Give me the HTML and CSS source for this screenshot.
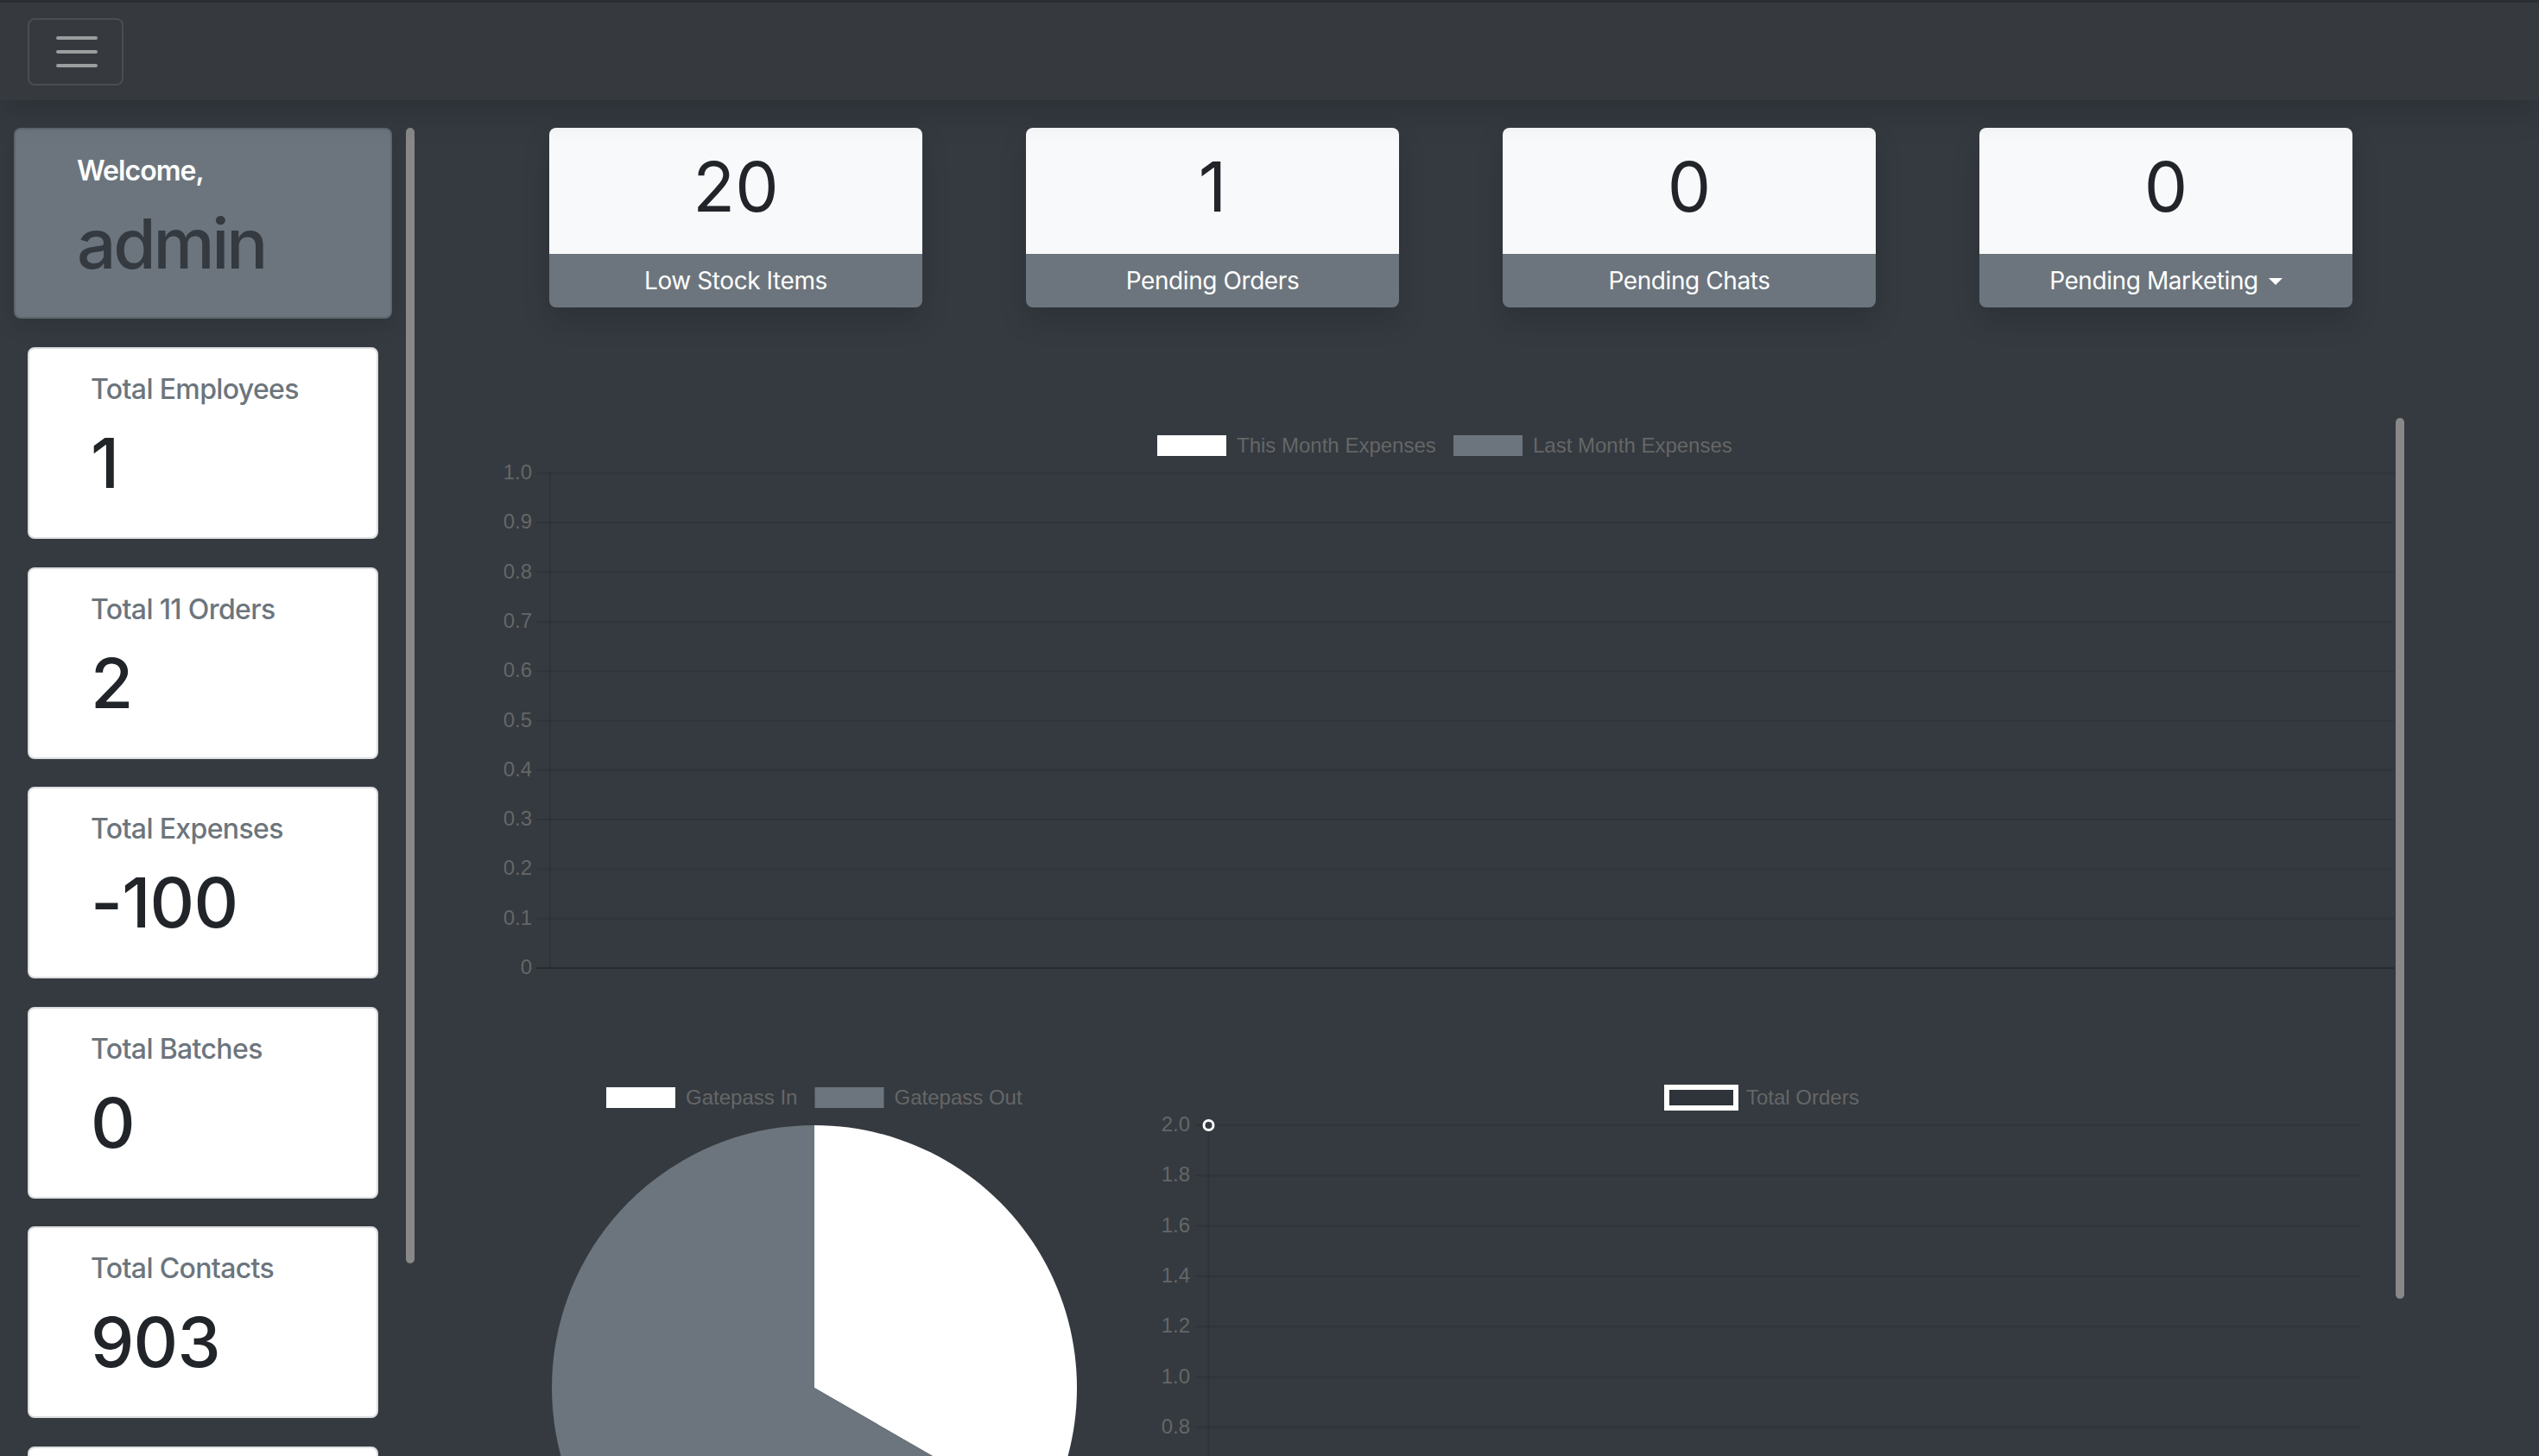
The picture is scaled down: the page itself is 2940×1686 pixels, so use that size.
FILE: index.html
```html
<!DOCTYPE html>
<html lang="en">
<head>
  <meta charset="UTF-8">
  <title>Dashboard</title>
  <meta name="viewport" content="width=device-width, initial-scale=1.0">
  <link rel="stylesheet" href="styles.css">
</head>
<body>
  <!-- Top bar with the menu toggler -->
  <header class="navbar">
    <button class="toggler" aria-label="Toggle navigation">
      <svg viewBox="0 0 30 30" width="60" height="60">
        <path d="M4 7h22M4 15h22M4 23h22" stroke="rgba(255,255,255,0.5)" stroke-width="2" stroke-linecap="round" fill="none"/>
      </svg>
    </button>
  </header>

  <div class="layout">
    <!-- Left column: greeting and totals -->
    <aside class="sidebar">
      <div class="side-list">
        <div class="welcome">
          <div class="welcome-label">Welcome,</div>
          <div class="welcome-name">admin</div>
        </div>
        <div class="stat">
          <div class="stat-title">Total Employees</div>
          <div class="stat-value">1</div>
        </div>
        <div class="stat">
          <div class="stat-title">Total 11 Orders</div>
          <div class="stat-value">2</div>
        </div>
        <div class="stat">
          <div class="stat-title">Total Expenses</div>
          <div class="stat-value">-100</div>
        </div>
        <div class="stat">
          <div class="stat-title">Total Batches</div>
          <div class="stat-value">0</div>
        </div>
        <div class="stat">
          <div class="stat-title">Total Contacts</div>
          <div class="stat-value">903</div>
        </div>
        <div class="stat">
          <div class="stat-title">Total Suppliers</div>
          <div class="stat-value">0</div>
        </div>
      </div>
      <div class="rail"><div class="thumb side-thumb"></div></div>
    </aside>

    <main class="main">
      <!-- Pending counters -->
      <section class="tiles">
        <div class="tile">
          <div class="tile-value">20</div>
          <div class="tile-label">Low Stock Items</div>
        </div>
        <div class="tile">
          <div class="tile-value">1</div>
          <div class="tile-label">Pending Orders</div>
        </div>
        <div class="tile">
          <div class="tile-value">0</div>
          <div class="tile-label">Pending Chats</div>
        </div>
        <div class="tile">
          <div class="tile-value">0</div>
          <div class="tile-label"><span class="dropdown-toggle">Pending Marketing</span></div>
        </div>
      </section>

      <!-- Charts -->
      <section class="charts">
        <div class="chart-body">
          <svg class="chart bar-chart" width="2199" height="755" viewBox="0 0 2199 755">
            <g class="legend">
              <rect x="765" y="20" width="80" height="24" fill="#ffffff"/>
              <text x="857" y="39.5">This Month Expenses</text>
              <rect x="1108" y="20" width="80" height="24" fill="#6c757d"/>
              <text x="1200" y="39.5">Last Month Expenses</text>
            </g>
            <g class="grid">
              <line x1="46" y1="64" x2="2197" y2="64"/>
              <line x1="46" y1="121.3" x2="2197" y2="121.3"/>
              <line x1="46" y1="178.6" x2="2197" y2="178.6"/>
              <line x1="46" y1="235.9" x2="2197" y2="235.9"/>
              <line x1="46" y1="293.2" x2="2197" y2="293.2"/>
              <line x1="46" y1="350.5" x2="2197" y2="350.5"/>
              <line x1="46" y1="407.8" x2="2197" y2="407.8"/>
              <line x1="46" y1="465.1" x2="2197" y2="465.1"/>
              <line x1="46" y1="522.4" x2="2197" y2="522.4"/>
              <line x1="46" y1="579.7" x2="2197" y2="579.7"/>
              <line x1="62" y1="64" x2="62" y2="637"/>
              <line class="zero" x1="46" y1="637" x2="2197" y2="637"/>
            </g>
            <g class="ticks">
              <text x="41" y="71">1.0</text>
              <text x="41" y="128.3">0.9</text>
              <text x="41" y="185.6">0.8</text>
              <text x="41" y="242.9">0.7</text>
              <text x="41" y="300.2">0.6</text>
              <text x="41" y="357.5">0.5</text>
              <text x="41" y="414.8">0.4</text>
              <text x="41" y="472.1">0.3</text>
              <text x="41" y="529.4">0.2</text>
              <text x="41" y="586.7">0.1</text>
              <text x="41" y="644">0</text>
            </g>
          </svg>

          <div class="chart-row">
            <svg class="chart pie-chart" width="736" height="690" viewBox="0 0 736 690">
              <g class="legend">
                <rect x="127" y="20" width="80" height="24" fill="#ffffff"/>
                <text x="219" y="39.5">Gatepass In</text>
                <rect x="368.5" y="20" width="80" height="24" fill="#6c757d"/>
                <text x="460.5" y="39.5">Gatepass Out</text>
              </g>
              <path d="M368 368 L368 64 A304 304 0 0 1 631.27 520 Z" fill="#ffffff"/>
              <path d="M368 368 L631.27 520 A304 304 0 1 1 368 64 Z" fill="#6c757d"/>
            </svg>

            <svg class="chart line-chart" width="1388" height="690" viewBox="0 0 1388 690">
              <g class="legend">
                <rect x="585" y="20" width="80" height="24" fill="rgba(0,0,0,0.1)" stroke="#ffffff" stroke-width="6"/>
                <text x="677" y="39.5">Total Orders</text>
              </g>
              <g class="grid">
                <line x1="39" y1="64" x2="1388" y2="64"/>
                <line x1="39" y1="122.3" x2="1388" y2="122.3"/>
                <line x1="39" y1="180.6" x2="1388" y2="180.6"/>
                <line x1="39" y1="238.9" x2="1388" y2="238.9"/>
                <line x1="39" y1="297.2" x2="1388" y2="297.2"/>
                <line x1="39" y1="355.5" x2="1388" y2="355.5"/>
                <line x1="39" y1="413.8" x2="1388" y2="413.8"/>
                <line x1="39" y1="472.1" x2="1388" y2="472.1"/>
                <line x1="39" y1="530.4" x2="1388" y2="530.4"/>
                <line x1="39" y1="588.7" x2="1388" y2="588.7"/>
                <line x1="54.5" y1="64" x2="54.5" y2="667"/>
                <line class="zero" x1="39" y1="647" x2="1388" y2="647"/>
              </g>
              <g class="ticks">
                <text x="33" y="71">2.0</text>
                <text x="33" y="129.3">1.8</text>
                <text x="33" y="187.6">1.6</text>
                <text x="33" y="245.9">1.4</text>
                <text x="33" y="304.2">1.2</text>
                <text x="33" y="362.5">1.0</text>
                <text x="33" y="420.8">0.8</text>
                <text x="33" y="479.1">0.6</text>
                <text x="33" y="537.4">0.4</text>
                <text x="33" y="595.7">0.2</text>
                <text x="33" y="654">0</text>
              </g>
              <circle cx="54.5" cy="64" r="5.5" fill="#343a40" stroke="#ffffff" stroke-width="3"/>
            </svg>
          </div>
        </div>
        <div class="rail"><div class="thumb chart-thumb"></div></div>
      </section>
    </main>
  </div>
</body>
</html>
```

FILE: styles.css
```css
html, body {
  margin: 0;
  padding: 0;
}
body {
  height: 1686px;
  overflow: hidden;
  background: #343a40;
  font-family: Inter, "Noto Sans", sans-serif;
}

/* Top bar */
.navbar {
  position: relative;
  z-index: 2;
  height: 113px;
  border-top: 3px solid #2b2f33;
  background: #363a3f;
  display: flex;
  align-items: center;
  padding: 0 32px;
  box-shadow: 0 16px 32px rgba(0,0,0,0.15);
}
.toggler {
  width: 111px;
  height: 78px;
  margin-top: 1px;
  padding: 0;
  display: flex;
  align-items: center;
  justify-content: center;
  background: transparent;
  border: 2px solid rgba(255,255,255,0.1);
  border-radius: 8px;
}
.toggler svg {
  display: block;
  margin-left: 3px;
}

.layout {
  display: flex;
  height: 1570px;
  overflow: hidden;
}

/* Fake scroll rails */
.rail {
  width: 10px;
  flex: none;
}
.thumb {
  width: 10px;
  background: #888;
  border-radius: 5px;
}
.side-thumb { height: 1315px; }
.chart-thumb { height: 1020px; }

/* Sidebar */
.sidebar {
  width: 480px;
  flex: none;
  margin-top: 32px;
  display: flex;
  overflow: hidden;
}
.side-list {
  width: 438px;
  padding: 0 16px;
}
.welcome {
  box-sizing: border-box;
  height: 221px;
  margin-bottom: 33px;
  padding: 29px 0 0 71px;
  background: #6c757d;
  border: 2px solid rgba(0,0,0,0.125);
  border-radius: 8px;
  box-shadow: 0 8px 24px rgba(0,0,0,0.12);
}
.welcome-label {
  color: #fff;
  font-size: 32px;
  font-weight: 600;
  line-height: 1.2;
  letter-spacing: -0.03em;
  margin-bottom: 17px;
}
.welcome-name {
  color: #343a40;
  font-size: 80px;
  font-weight: 500;
  line-height: 1.2;
  letter-spacing: -0.04em;
}

.stat {
  box-sizing: border-box;
  height: 222px;
  margin: 0 16px 32.5px;
  padding: 28px 0 0 71px;
  background: #fff;
  border: 2px solid #dcdddf;
  border-radius: 8px;
}
.stat-title {
  color: #6c757d;
  font-size: 32px;
  font-weight: 500;
  line-height: 1.2;
  letter-spacing: -0.02em;
  margin-bottom: 18px;
}
.stat-value {
  color: #212529;
  font-size: 80px;
  font-weight: 500;
  line-height: 1.2;
  letter-spacing: -0.01em;
}

/* Main column */
.main {
  flex: 1;
  padding: 32px 0 0 95px;
}
.tiles {
  display: grid;
  grid-template-columns: repeat(4, 432px);
  column-gap: 120px;
  margin-left: 61px;
}
.tile {
  border-radius: 8px;
  overflow: hidden;
  box-shadow: 0 16px 32px rgba(0,0,0,0.15);
}
.tile-value {
  box-sizing: border-box;
  height: 146px;
  padding-top: 20px;
  background: #f8f9fa;
  color: #212529;
  font-size: 80px;
  line-height: 1.2;
  text-align: center;
}
.tile-label {
  height: 42px;
  padding: 10px 0;
  background: #6c757d;
  color: #fff;
  font-size: 28px;
  line-height: 42px;
  letter-spacing: -0.015em;
  text-align: center;
}
.dropdown-toggle::after {
  content: "";
  display: inline-block;
  margin-left: 12px;
  vertical-align: 5px;
  border-top: 8px solid #fff;
  border-left: 8px solid transparent;
  border-right: 8px solid transparent;
}

/* Charts */
.charts {
  display: flex;
  width: 2209px;
  height: 1202px;
  margin-top: 128px;
}
.chart-body {
  width: 2199px;
  overflow: hidden;
}
.chart {
  display: block;
  font-family: "Liberation Sans", Arial, sans-serif;
  font-size: 24px;
}
.chart text {
  fill: #666;
}
.chart .ticks text {
  text-anchor: end;
}
.chart .grid line {
  stroke: rgba(0,0,0,0.1);
  stroke-width: 2;
}
.chart .grid line.zero {
  stroke: rgba(0,0,0,0.25);
}
.chart-row {
  display: flex;
  gap: 34px;
}
```
